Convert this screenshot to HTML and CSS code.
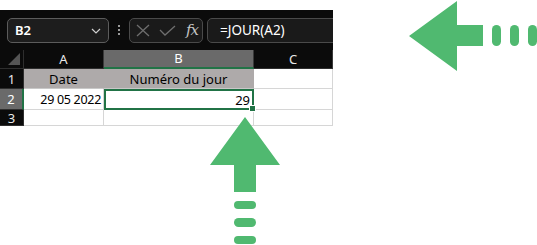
FILE: index.html
```html
<!DOCTYPE html>
<html lang="fr">
<head>
  <meta charset="UTF-8">
  <title>JOUR</title>
  <link rel="stylesheet" href="styles.css">
</head>
<body>
  <div class="sheet">
    <div class="formula-bar">
      <div class="name-box">
        <span class="name-text">B2</span>
        <svg class="chevron" width="10" height="6" viewBox="0 0 10 6"><path d="M1 1 L5 5 L9 1" fill="none" stroke="#cfcfcf" stroke-width="1.2"/></svg>
      </div>
      <div class="dots"><span></span><span></span><span></span></div>
      <div class="fx-box">
        <svg width="14" height="13" viewBox="0 0 14 13"><path d="M1 1 L13 12 M13 1 L1 12" stroke="#6e6e6e" stroke-width="1.3" fill="none"/></svg>
        <svg width="17" height="11" viewBox="0 0 17 11"><path d="M1 5 L6 10 L16 1" stroke="#6e6e6e" stroke-width="1.3" fill="none"/></svg>
        <span class="fx">fx</span>
      </div>
      <div class="formula-input">=JOUR(A2)</div>
    </div>

    <div class="grid">
      <div class="corner"></div>
      <div class="col-head">A</div>
      <div class="col-head active">B</div>
      <div class="col-head">C</div>

      <div class="row-head">1</div>
      <div class="cell shaded center">Date</div>
      <div class="cell shaded center">Numéro du jour</div>
      <div class="cell"></div>

      <div class="row-head active">2</div>
      <div class="cell right date">29 05 2022</div>
      <div class="cell right selected">29<span class="handle"></span></div>
      <div class="cell"></div>

      <div class="row-head">3</div>
      <div class="cell"></div>
      <div class="cell"></div>
      <div class="cell"></div>
    </div>
  </div>

  <svg class="arrow-left" width="137" height="75" viewBox="400 0 137 75">
    <path d="M409 36 L457 1 L457 25 L483 25 L483 46 L457 46 L457 71 Z" fill="#50b970"/>
    <rect x="492" y="25" width="9" height="21" rx="4.5" fill="#50b970"/>
    <rect x="510" y="25" width="9" height="21" rx="4.5" fill="#50b970"/>
    <rect x="528" y="25" width="9" height="21" rx="4.5" fill="#50b970"/>
  </svg>

  <svg class="arrow-up" width="80" height="135" viewBox="205 110 80 135">
    <path d="M245 117 L280 165 L256 165 L256 192 L234 192 L234 165 L210 165 Z" fill="#50b970"/>
    <rect x="234" y="201" width="22" height="8" rx="4" fill="#50b970"/>
    <rect x="234" y="218" width="22" height="9" rx="4.5" fill="#50b970"/>
    <rect x="234" y="236" width="22" height="8" rx="4" fill="#50b970"/>
  </svg>
</body>
</html>
```

FILE: styles.css
```css
* {
  margin: 0;
  padding: 0;
  box-sizing: border-box;
}

body {
  width: 537px;
  height: 245px;
  background: #fff;
  font-family: 'Noto Sans', 'Open Sans', sans-serif;
  position: relative;
  overflow: hidden;
}

.sheet {
  margin-top: 10px;
  width: 333px;
  background: #0b0b0b;
  overflow: hidden;
}

/* Formula bar */
.formula-bar {
  display: flex;
  align-items: center;
  height: 40px;
  padding-left: 7px;
}

.formula-bar > * {
  flex: none;
}

.name-box {
  width: 102px;
  height: 25px;
  border: 1px solid #5c5c5c;
  border-radius: 5px;
  background: #1d1d1d;
  display: flex;
  align-items: center;
  justify-content: space-between;
  padding: 0 7px 0 7px;
  color: #fff;
  font-size: 13px;
  font-weight: 600;
}

.chevron {
  margin-top: 1px;
}

.dots {
  width: 20px;
  display: flex;
  flex-direction: column;
  align-items: center;
  gap: 2px;
}

.dots span {
  width: 2px;
  height: 2px;
  background: #9a9a9a;
}

.fx-box {
  width: 74px;
  height: 25px;
  border: 1px solid #4a4a4a;
  border-radius: 5px;
  background: #1a1a1a;
  display: flex;
  align-items: center;
  gap: 9px;
  padding-left: 6px;
}

.fx {
  font-family: 'DejaVu Serif', 'Liberation Serif', serif;
  font-style: italic;
  font-size: 15px;
  color: #c4c4c4;
  margin-left: 1px;
  letter-spacing: -1px;
}

.formula-input {
  margin-left: 4px;
  width: 160px;
  height: 25px;
  border: 1px solid #4a4a4a;
  border-radius: 5px;
  background: #1a1a1a;
  color: #fff;
  font-size: 13.5px;
  line-height: 23px;
  padding-left: 12px;
}

/* Grid */
.grid {
  display: grid;
  grid-template-columns: 24px 80px 150px 79px;
  grid-template-rows: 19px 20px 21px 16px;
}

.corner {
  position: relative;
  border-right: 1px solid #2e2e2e;
  border-bottom: 1px solid #2e2e2e;
}

.corner::after {
  content: '';
  position: absolute;
  right: 3px;
  bottom: 3px;
  width: 0;
  height: 0;
  border-left: 12px solid transparent;
  border-bottom: 12px solid #555;
}

.col-head {
  color: #e8e8e8;
  font-size: 13px;
  text-align: center;
  line-height: 18px;
  border-right: 1px solid #3a3a3a;
  border-bottom: 1px solid #2e2e2e;
}

.col-head.active {
  background: #6a6a6a;
  color: #fff;
  border-bottom: 2px solid #217346;
  line-height: 17px;
}

.row-head {
  color: #e8e8e8;
  font-size: 13px;
  text-align: center;
  border-bottom: 1px solid #2e2e2e;
  border-right: 1px solid #2e2e2e;
  display: flex;
  align-items: center;
  justify-content: center;
}

.row-head.active {
  background: #6a6a6a;
  color: #fff;
  border-right: 2px solid #217346;
}

.cell {
  background: #fff;
  color: #000;
  font-size: 13px;
  border-right: 1px solid #d6d6d6;
  border-bottom: 1px solid #d6d6d6;
  display: flex;
  align-items: center;
  padding: 0 3px;
  white-space: nowrap;
}

.cell.date {
  font-size: 12.5px;
  letter-spacing: -0.3px;
  padding-right: 2px;
}

.cell.shaded {
  background: #aeaaaa;
  border-right-color: #aeaaaa;
  border-bottom-color: #c8c8c8;
}

.center {
  justify-content: center;
}

.right {
  justify-content: flex-end;
}

.cell.selected {
  border: 2px solid #217346;
  position: relative;
  padding-right: 2px;
}

.handle {
  position: absolute;
  right: -4px;
  bottom: -4px;
  width: 7px;
  height: 7px;
  background: #217346;
  border: 1px solid #fff;
}

/* Arrows sit over the sheet */
.arrow-left {
  position: absolute;
  left: 400px;
  top: 0;
}

.arrow-up {
  position: absolute;
  left: 205px;
  top: 110px;
}
```
